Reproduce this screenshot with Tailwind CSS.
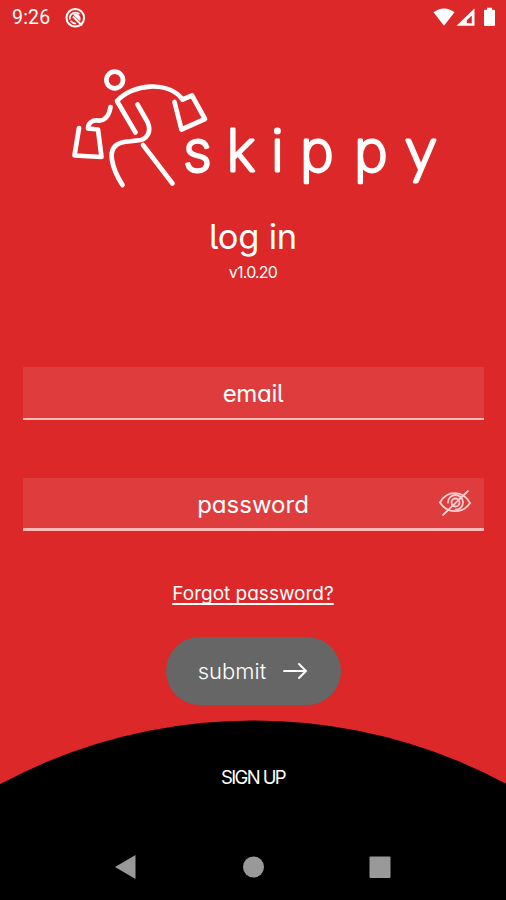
<!DOCTYPE html>
<html lang="en">
<head>
<meta charset="utf-8">
<title>Skippy – log in</title>
<script src="https://cdn.jsdelivr.net/npm/@tailwindcss/browser@4"></script>
</head>
<body class="bg-[#dc2828]">
<main class="relative flex h-[900px] w-[506px] flex-col overflow-hidden bg-[#dc2828] font-['Inter',sans-serif] font-normal text-white [font-feature-settings:'cv11','cv05']">
  <header class="flex h-[36px] shrink-0 items-center pl-[12px] pr-[8px]">
    <span class="w-[53px] font-[Roboto,sans-serif] text-[19.5px] leading-none tracking-[0.2px]">9:26</span>
    <svg class="size-[21px]" viewBox="0 0 21 21" fill="none" stroke="#fff"><circle cx="10.3" cy="9.800" r="8.800" stroke-width="2"/><path d="M5 11.500A5.700 5.700 0 0 1 14.500 6.200M5.800 12.800A5.600 5.600 0 0 0 11 15.500" stroke-width="1.700"/><path d="M8 8.500 17 17.500" stroke-width="2"/><path d="M8 6.500a5 5 0 0 1 7 6.500Z" fill="#fff" stroke="none"/></svg>
    <svg class="ml-auto h-[22px] w-[66px]" viewBox="0 0 66 22" fill="#fff"><path d="M1.500 5.300C7.500.1 16.500.1 22.500 5.300L12 18.800Z"/><path fill-rule="evenodd" d="M42.500 1.500V18.800H24.500ZM39.800 8.500 34.800 13.200V16.300H39.800Z"/><path d="M53 2.800H55V.8H60V2.800H62Q63 2.800 63 3.800V18Q63 19 62 19H53Q52 19 52 18V3.800Q52 2.800 53 2.800Z"/></svg>
  </header>

  <svg class="h-[160px] w-[506px] shrink-0" viewBox="0 36 506 160" role="img" aria-label="skippy">
    <g fill="none" stroke="#fff" stroke-width="4.700" stroke-linecap="round" stroke-linejoin="round">
      <circle cx="114.700" cy="80" r="8.300"/>
      <path d="M135.500 132.500 117 101C132 84 168 80 182.500 99.500L192 95.500 205 119 181.500 129.500 174.500 102"/>
      <path d="M137.500 104.500 147.500 122C152 132 147 140 137 140.500L124 142C113 144 110.500 151 112 160 113.500 169 117 176.500 122.500 185"/>
      <path d="M143 145 172.500 183.500"/>
      <path d="M110.500 107C109 117 104 121 98 120.500 92 120 88 123 88 128.500L98 129.500 101.500 157 74.500 155.500 79 128"/>
    </g>
    <text x="183 226.500 271 300 354 405.500" y="171" fill="#fff" stroke="#fff" stroke-width="2.800" stroke-linejoin="round" font-size="57" font-weight="200">skipp<tspan font-family="Lato, sans-serif" font-size="61" font-weight="300">y</tspan></text>
  </svg>

  <h1 class="mt-[21px] text-center text-[34.500px] leading-[40px] tracking-[-0.200px]">log in</h1>
  <p class="mt-[5px] text-center text-[16px] leading-[20px] tracking-[-0.800px]">v1.0.20</p>

  <form class="mt-[85px] flex flex-col items-center">
    <div class="flex h-[53px] w-[461px] items-center justify-center border-b-[2.500px] border-[#fcb9b9] bg-[#df3d3d] pt-[3px]">
      <span class="text-[24px] leading-none tracking-[-0.300px]">email</span>
    </div>
    <div class="relative mt-[58px] flex h-[53px] w-[461px] items-center justify-center border-b-[3px] border-[#fcb9b9] bg-[#df3d3d] pt-[3px]">
      <span class="text-[24px] leading-none">password</span>
      <svg class="absolute right-[11px] top-[10px] h-[30px] w-[36px]" viewBox="0 0 36 30" fill="none" stroke="#ffd0d0" stroke-width="1.800" stroke-linecap="round"><path d="M3 14.500C10 2 26 2 33 15 26 26 10 26 3 14.500Z"/><path d="M11 14.500a7.500 7.500 0 0 1 15 0c0 4-3.300 7.200-7.500 7.200"/><circle cx="18.500" cy="14.500" r="4"/><path d="M6 27 31 3"/></svg>
    </div>
    <a class="mt-[50px] text-[19px] leading-[26px] underline decoration-[1.500px] underline-offset-[3px] [text-decoration-skip-ink:none]">Forgot password?</a>
    <button type="button" class="mt-[30px] flex h-[68px] w-[175px] items-center justify-center gap-[17px] rounded-full bg-[#666]">
      <span class="text-[22px] font-light leading-none">submit</span>
      <svg class="h-[18px] w-[25px]" viewBox="0 0 25 18" fill="none" stroke="#fff" stroke-width="2" stroke-linecap="round"><path d="M1 9H23M16 2 23 9 16 16"/></svg>
    </button>
  </form>

  <section class="relative mt-auto flex h-[180px] shrink-0 flex-col">
    <svg class="absolute inset-0 h-[180px] w-[506px]" viewBox="0 720 506 180"><circle cx="253.500" cy="1256.500" r="536"/></svg>
    <a class="relative mt-[44px] text-center text-[18.500px] leading-[26px] tracking-[-1.600px]">SIGN UP</a>
    <nav class="relative mt-auto flex h-[66px] items-center justify-between pl-[114px] pr-[114px]">
      <svg class="size-[24px]" viewBox="0 0 24 24" fill="#999"><path d="M1 12 21.500 0V24Z"/></svg>
      <svg class="size-[22px]" viewBox="0 0 22 22" fill="#999"><circle cx="11.500" cy="11" r="10.500"/></svg>
      <svg class="size-[24px]" viewBox="0 0 24 24" fill="#999"><rect x="1.500" y="1.500" width="21" height="21.500" rx="1"/></svg>
    </nav>
  </section>
</main>
</body>
</html>
